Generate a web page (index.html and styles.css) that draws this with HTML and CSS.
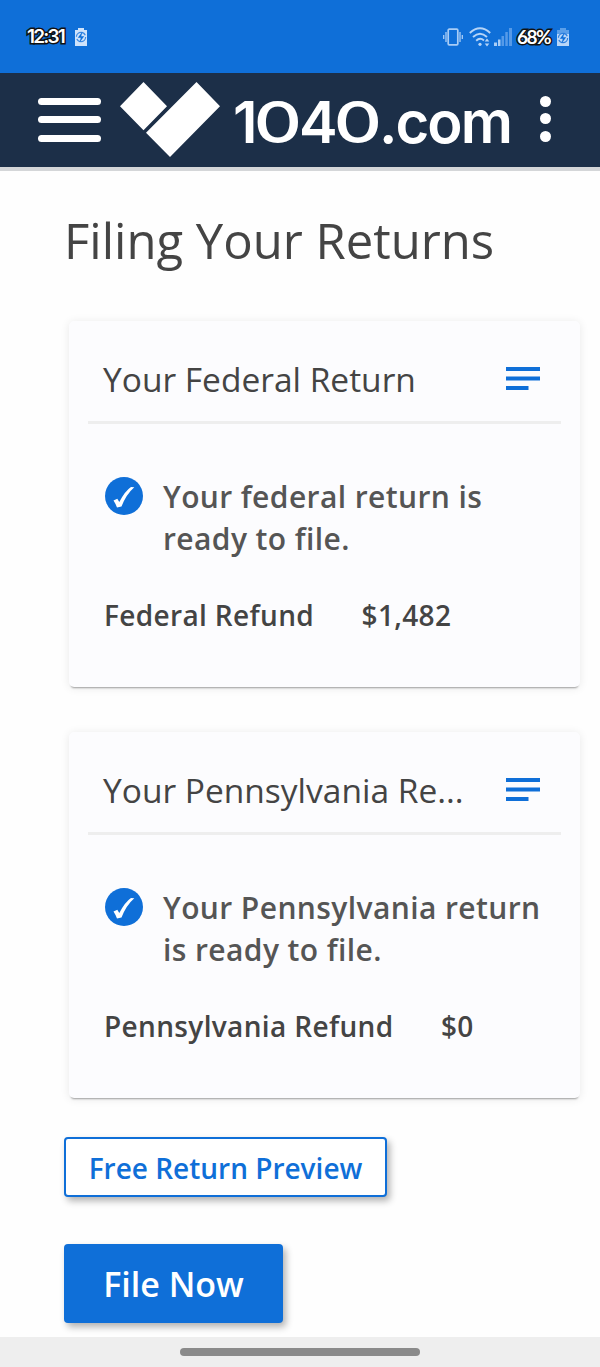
FILE: index.html
```html
<!DOCTYPE html>
<html lang="en">
<head>
  <meta charset="UTF-8" />
  <meta name="viewport" content="width=device-width, initial-scale=1.0"/>
  <title>1040.com</title>
  <link rel="stylesheet" href="styles.css">
</head>
<body>
  <div class="status-bar">
    <span class="clock">12:31</span>
    <svg class="battery" viewBox="0 0 12 18">
      <path d="M3 0h6v2h3v16H0V2h3z" fill="#cfe3fb"/>
      <circle cx="6" cy="9" r="4.6" fill="none" stroke="#3d8be4" stroke-width="1.2" stroke-dasharray="12 2.4"/>
      <path d="M7.5 3.5L2.8 9.8h3L4.5 14.5l4.7-6.3h-3z" fill="#0f6fd8"/>
    </svg>
    <div class="status-right">
      <svg class="vibrate" viewBox="0 0 20 18" fill="none" stroke="#a9cdf6">
        <rect x="5.2" y="1.2" width="9.6" height="15.6" rx="1" stroke-width="1.7"/>
        <path d="M.7 7v4M3 4v10M17 4v10M19.3 7v4" stroke-width="1.3"/>
      </svg>
      <svg class="wifi" viewBox="0 0 22 20" fill="none" stroke="#b5d4f7" stroke-width="1.9">
        <path d="M.8 6Q11-3.6 21.2 6M4 10Q11 3.4 18 10M7.2 13.7Q11 10 15 13.5"/>
        <circle cx="11" cy="17.3" r="1.6" fill="#b5d4f7" stroke="none"/>
        <path d="M18 11.5l2.3 3h-4.6zM18 19.5l2.3-3h-4.6z" fill="#b5d4f7" stroke="none"/>
      </svg>
      <svg class="signal" viewBox="0 0 18 18">
        <path d="M0 14.5h3V18H0zM4 11.5h2.5V18H4z" fill="#a9cdf6"/>
        <path d="M7.5 8h2.5v10H7.5zM11.3 4h2.5v14h-2.5zM15 0h3v18h-3z" fill="#559ae8"/>
      </svg>
      <span class="percent">68%</span>
      <svg class="battery" viewBox="0 0 12 18">
        <path d="M3 0h6v2h3v16H0V2h3z" fill="#b9d6f8"/>
        <path d="M3 0h6v2h3v4H0V2h3z" fill="#5b9fe9"/>
        <circle cx="6" cy="10" r="4.6" fill="none" stroke="#2f80df" stroke-width="1.2" stroke-dasharray="12 2.4"/>
        <path d="M7.5 4.5L2.8 10.8h3L4.5 15.5l4.7-6.3h-3z" fill="#0f6fd8"/>
      </svg>
    </div>
  </div>

  <header class="header">
    <div class="menu"><span></span><span></span><span></span></div>
    <svg class="logo" viewBox="0 0 100 75" fill="#fff">
      <path d="M23.5 0L47 24.2 23.5 48.2 0 24.2zM76.5 0L100 24.2 50 75 26 50.8z"/>
    </svg>
    <div class="brand">1<span class="wide">0</span>4<span class="wide">0</span>.com</div>
    <div class="more"><span></span><span></span><span></span></div>
  </header>

  <main>
    <h1>Filing Your Returns</h1>

    <section class="card">
      <div class="card-head">
        <h2>Your Federal Return</h2>
        <svg class="lines" viewBox="0 0 34 23" fill="#0f6fd8"><path d="M0 0h34v4H0zM0 9.5h34v4H0zM0 19h22.5v4H0z"/></svg>
      </div>
      <div class="message">
        <svg class="check" viewBox="0 0 38 38">
          <circle cx="19" cy="19" r="19" fill="#0f6fd8"/>
          <path d="M8.5 23.5L12.3 21.8 14.3 25Q20 14 26 10L29.3 10.2Q21 17.5 16.5 29.5L12 30.5Q10.5 26.5 8.5 23.5z" fill="#fff"/>
        </svg>
        <p>Your federal return is<br>ready to file.</p>
      </div>
      <div class="refund"><span>Federal Refund</span><span>$1,482</span></div>
    </section>

    <section class="card">
      <div class="card-head">
        <h2>Your Pennsylvania Re...</h2>
        <svg class="lines" viewBox="0 0 34 23" fill="#0f6fd8"><path d="M0 0h34v4H0zM0 9.5h34v4H0zM0 19h22.5v4H0z"/></svg>
      </div>
      <div class="message">
        <svg class="check" viewBox="0 0 38 38">
          <circle cx="19" cy="19" r="19" fill="#0f6fd8"/>
          <path d="M8.5 23.5L12.3 21.8 14.3 25Q20 14 26 10L29.3 10.2Q21 17.5 16.5 29.5L12 30.5Q10.5 26.5 8.5 23.5z" fill="#fff"/>
        </svg>
        <p>Your Pennsylvania return<br>is ready to file.</p>
      </div>
      <div class="refund"><span>Pennsylvania Refund</span><span>$0</span></div>
    </section>

    <div class="actions">
      <button class="preview">Free Return Preview</button>
      <button class="file">File Now</button>
    </div>
  </main>

  <div class="nav-bar"><div class="handle"></div></div>
</body>
</html>
```
FILE: styles.css
```css
* {
  margin: 0;
  padding: 0;
  box-sizing: border-box;
}
body {
  height: 1367px;
  display: flex;
  flex-direction: column;
  overflow: hidden;
  background: #fefefe;
  color: #444;
  font-family: "Open Sans", sans-serif;
}
svg {
  display: block;
  flex: none;
}

.status-bar {
  flex: none;
  height: 73px;
  padding: 0 31px 0 27px;
  display: flex;
  align-items: center;
  background: #0f6fd8;
}
.clock, .percent {
  font-family: Lato, sans-serif;
  font-size: 19px;
  font-weight: bold;
  line-height: 24px;
  letter-spacing: -1.5px;
  color: #fff;
  -webkit-text-stroke: 3px #111;
  paint-order: stroke fill;
  white-space: nowrap;
}
.clock {
  width: 48px;
  font-family: Inter, sans-serif;
  font-weight: 600;
  letter-spacing: -1.8px;
}
.percent {
  width: 40px;
}
.battery {
  width: 12px;
  height: 18px;
}
.status-right {
  margin-left: auto;
  display: flex;
  align-items: center;
}
.vibrate {
  width: 20px;
  height: 18px;
  margin-right: 6px;
}
.wifi {
  width: 22px;
  height: 20px;
  margin-right: 3px;
}
.signal {
  width: 18px;
  height: 18px;
  margin-right: 5px;
}

.header {
  flex: none;
  height: 98px;
  padding: 0 0 1px 38px;
  display: flex;
  align-items: center;
  background: #1c2f48;
  border-bottom: 4px solid #d4d6d8;
}
.menu {
  width: 63px;
  height: 44px;
  display: flex;
  flex-direction: column;
  justify-content: space-between;
}
.menu span {
  height: 7px;
  border-radius: 4px;
  background: #fff;
}
.logo {
  width: 100px;
  height: 75px;
  margin-left: 19px;
}
.brand {
  width: 281px;
  margin-left: 13px;
  padding-top: 5px;
  font-family: Inter, sans-serif;
  font-size: 58px;
  font-weight: 600;
  line-height: 88px;
  letter-spacing: -2px;
  color: #fff;
  white-space: nowrap;
}
.wide {
  display: inline-block;
  letter-spacing: 0;
  margin: 0 3px;
  font-weight: 500;
  transform: scaleX(1.3);
}
.more {
  width: 11px;
  height: 46px;
  margin: 0 0 2px 26px;
  display: flex;
  flex-direction: column;
  justify-content: space-between;
}
.more span {
  height: 11px;
  border-radius: 50%;
  background: #fff;
}

main {
  flex: 1;
  padding: 34px 20.5px 0 64px;
}
h1 {
  height: 70px;
  margin-bottom: 46px;
  font-size: 49px;
  font-weight: 400;
  line-height: 70px;
  white-space: nowrap;
}
.card {
  height: 366px;
  margin: 0 0 45px 5px;
  padding: 0 19px;
  border-radius: 5px;
  background: #fcfcfe;
  box-shadow: 0 3px 2px -2px rgba(0,0,0,0.35), 0 1px 10px rgba(0,0,0,0.09);
}
.card-head {
  height: 103px;
  padding: 15px 20.5px 0 15px;
  display: flex;
  align-items: center;
  justify-content: space-between;
  border-bottom: 3px solid #eee;
}
h2 {
  padding-top: 1px;
  font-size: 33.5px;
  font-weight: 400;
  line-height: 46px;
  white-space: nowrap;
}
.lines {
  width: 34px;
  height: 23px;
}
.message {
  height: 83px;
  margin: 53px 0 0 17px;
  display: flex;
}
.check {
  width: 38px;
  height: 38px;
}
.message p {
  margin: -1px 0 0 20px;
  color: #555;
  font-size: 30px;
  font-weight: 600;
  line-height: 41.5px;
  letter-spacing: 0.4px;
  white-space: nowrap;
}
.refund {
  margin: 35px 0 0 16px;
  display: flex;
  gap: 47.5px;
  font-size: 28px;
  font-weight: 600;
  line-height: 40px;
  letter-spacing: 0.35px;
  white-space: nowrap;
}
.actions {
  margin-top: -6px;
  display: flex;
  flex-direction: column;
  align-items: flex-start;
  gap: 47px;
}
button {
  font-family: inherit;
  font-weight: 600;
  border-radius: 4px;
  box-shadow: 3px 4px 7px rgba(0,0,0,0.3);
  white-space: nowrap;
}
.preview {
  width: 323px;
  height: 60px;
  padding-top: 1px;
  border: 2px solid #0f6fd8;
  background: #fff;
  color: #0f6fd8;
  font-size: 28px;
}
.file {
  width: 219px;
  height: 79px;
  border: none;
  background: #0f6fd8;
  color: #fff;
  font-size: 34px;
}

.nav-bar {
  flex: none;
  height: 30px;
  display: flex;
  align-items: center;
  justify-content: center;
  background: #eee;
}
.handle {
  width: 240px;
  height: 8px;
  border-radius: 4px;
  background: #8a8a8a;
}
```
